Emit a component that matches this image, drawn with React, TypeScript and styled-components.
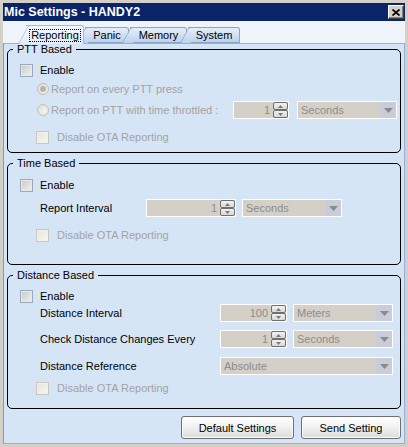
import React from "react";
import styled, { createGlobalStyle } from "styled-components";

const Global = createGlobalStyle`
  html, body { margin: 0; padding: 0; background: #d4d0c8; }
  body { font-family: "Liberation Sans", Arial, sans-serif; font-size: 11px; color: #000; }
  * { box-sizing: border-box; }
`;

const Window = styled.div`
  width: 408px;
  height: 447px;
  background: #d4d0c8;
  padding: 3px 3px 3px 3px;
  display: flex;
  flex-direction: column;
`;

const TitleBar = styled.div`
  height: 18px;
  background: #0a246a;
  display: flex;
  align-items: center;
  justify-content: space-between;
  padding: 0 1px 0 1px;
`;

const TitleText = styled.span`
  color: #fff;
  font-weight: bold;
  font-size: 12.5px;
`;

const CloseButton = styled.div`
  width: 16px;
  height: 14px;
  background: #d4d0c8;
  border: 1px solid;
  border-color: #fff #404040 #404040 #fff;
  box-shadow: inset -1px -1px 0 #808080;
  display: flex;
  align-items: center;
  justify-content: center;
`;

const TabStrip = styled.div`
  height: 22px;
  background: #eff3fa;
  display: flex;
  align-items: flex-end;
  padding-left: 23px;
`;

const Tab = styled.div<{ $active?: boolean; $w: number }>`
  position: relative;
  width: ${(p) => p.$w}px;
  height: ${(p) => (p.$active ? 19 : 16)}px;
  margin-right: 1px;
  margin-bottom: ${(p) => (p.$active ? -1 : 0)}px;
  z-index: ${(p) => (p.$active ? 3 : 1)};
  border: 1px solid ${(p) => (p.$active ? "#9fbbe0" : "#8aa5c8")};
  border-left: none;
  border-bottom: ${(p) => (p.$active ? "none" : "1px solid #8aa5c8")};
  border-top-right-radius: 3px;
  background: ${(p) =>
    p.$active
      ? "linear-gradient(#f4f8fd, #e2edf9)"
      : "linear-gradient(#e6eef9, #bcd2ec)"};
  display: flex;
  align-items: center;
  justify-content: center;
  padding-left: 1px;
  color: #000;

  &::before {
    content: "";
    position: absolute;
    left: -8px;
    top: -1px;
    bottom: ${(p) => (p.$active ? 0 : -1)}px;
    width: 10px;
    border-left: 1px solid ${(p) => (p.$active ? "#9fbbe0" : "#8aa5c8")};
    border-top: 1px solid ${(p) => (p.$active ? "#9fbbe0" : "#8aa5c8")};
    border-top-left-radius: 3px;
    background: inherit;
    transform-origin: bottom left;
    transform: skewX(-28deg);
    z-index: -1;
  }
`;

const TabLabel = styled.span<{ $focus?: boolean }>`
  position: relative;
  z-index: 2;
  padding: 0 1px;
  line-height: 11px;
  white-space: nowrap;
  border: 1px dotted ${(p) => (p.$focus ? "#000" : "transparent")};
`;

const Panel = styled.div`
  flex: 1;
  position: relative;
  z-index: 2;
  background: #d6e5f6;
  border: 1px solid #8fb1dc;
  border-left-color: #7f9db9;
  padding: 0 3px 0 3px;
  display: flex;
  flex-direction: column;
`;

const Group = styled.fieldset<{ $h: number; $mt: number }>`
  margin: ${(p) => p.$mt}px 0 0 0;
  padding: 0;
  min-width: 0;
  height: ${(p) => p.$h}px;
  border: 1px solid #000;
  border-radius: 5px;
`;

const Legend = styled.legend`
  margin-left: 5px;
  padding: 0 4px;
  line-height: 12px;
  font-size: 11px;
  color: #000;
`;

const Row = styled.div<{ $mt: number; $ml: number; $h?: number; $gap?: number }>`
  display: flex;
  align-items: center;
  height: ${(p) => p.$h ?? 18}px;
  margin-top: ${(p) => p.$mt}px;
  padding-left: ${(p) => p.$ml}px;
  gap: ${(p) => p.$gap ?? 0}px;
`;

const Label = styled.span<{ $dim?: boolean; $w?: number; $ml?: number }>`
  color: ${(p) => (p.$dim ? "#a3a3a3" : "#000")};
  width: ${(p) => (p.$w ? `${p.$w}px` : "auto")};
  margin-left: ${(p) => p.$ml ?? 0}px;
  white-space: nowrap;
  flex-shrink: 0;
`;

const Check = styled.span<{ $dim?: boolean }>`
  width: 13px;
  height: 13px;
  flex-shrink: 0;
  border: 1px solid ${(p) => (p.$dim ? "#cac8bb" : "#9aa9bd")};
  background: ${(p) =>
    p.$dim
      ? "linear-gradient(135deg, #e6e4da, #f7f7f4)"
      : "linear-gradient(135deg, #c9c9c6, #f2f2f0)"};
  box-shadow: inset 0 0 0 1px ${(p) => (p.$dim ? "#f2f1ea" : "#e8e8e6")};
`;

const Radio = styled.span<{ $checked?: boolean }>`
  width: 12px;
  height: 12px;
  flex-shrink: 0;
  border-radius: 50%;
  border: 1px solid #c2c0b4;
  background: radial-gradient(circle at 65% 65%, #f4f4f0, #dcdad0);
  display: flex;
  align-items: center;
  justify-content: center;
  &::after {
    content: "";
    display: ${(p) => (p.$checked ? "block" : "none")};
    width: 6px;
    height: 6px;
    border-radius: 50%;
    background: #b8b6aa;
  }
`;

const Field = styled.div<{ $w: number }>`
  width: ${(p) => p.$w}px;
  height: 18px;
  flex-shrink: 0;
  border: 1px solid #fff;
  background: #d4d0c8;
  display: flex;
  align-items: center;
  color: #8d8d8d;
`;

const FieldValue = styled.span`
  flex: 1;
  text-align: right;
  padding-right: 3px;
`;

const SpinBox = styled.div`
  width: 15px;
  height: 16px;
  display: flex;
  flex-direction: column;
`;

const SpinBtn = styled.div`
  flex: 1;
  border: 1px solid #6f6f6f;
  border-radius: 2px;
  background: linear-gradient(#f2f2f2, #d8d8d8);
  display: flex;
  align-items: center;
  justify-content: center;
`;

const ComboText = styled.span`
  flex: 1;
  padding-left: 3px;
`;

const DropBtn = styled.div`
  width: 16px;
  height: 16px;
  background: #c9ccd9;
  display: flex;
  align-items: center;
  justify-content: center;
`;

const ButtonRow = styled.div`
  display: flex;
  justify-content: flex-end;
  gap: 7px;
  margin-top: 7px;
`;

const Button = styled.div<{ $w: number }>`
  width: ${(p) => p.$w}px;
  height: 23px;
  border: 1px solid #707070;
  border-radius: 3px;
  background: linear-gradient(#ffffff, #f0f0f0 50%, #dcdcdc);
  box-shadow: inset 0 0 0 1px #fbfbfb;
  display: flex;
  align-items: center;
  justify-content: center;
  color: #000;
`;

const Arrow = ({ up }: { up?: boolean }) => (
  <svg width="5" height="3" viewBox="0 0 5 3">
    <path d={up ? "M0 3 L2.5 0 L5 3 Z" : "M0 0 L2.5 3 L5 0 Z"} fill="#7a7a7a" />
  </svg>
);

const Spinner = ({ w, value }: { w: number; value: string }) => (
  <Field $w={w}>
    <FieldValue>{value}</FieldValue>
    <SpinBox>
      <SpinBtn>
        <Arrow up />
      </SpinBtn>
      <SpinBtn>
        <Arrow />
      </SpinBtn>
    </SpinBox>
  </Field>
);

const Combo = ({ w, value }: { w: number; value: string }) => (
  <Field $w={w}>
    <ComboText>{value}</ComboText>
    <DropBtn>
      <svg width="9" height="5" viewBox="0 0 9 5">
        <path d="M0 0 L9 0 L4.5 5 Z" fill="#8a8a8a" />
      </svg>
    </DropBtn>
  </Field>
);

export default function App() {
  return (
    <>
      <Global />
      <Window>
        <TitleBar>
          <TitleText>Mic Settings - HANDY2</TitleText>
          <CloseButton>
            <svg width="8" height="7" viewBox="0 0 8 7">
              <path d="M0.5 0.5 L7.5 6.5 M7.5 0.5 L0.5 6.5" stroke="#000" strokeWidth="1.6" />
            </svg>
          </CloseButton>
        </TitleBar>
        <TabStrip>
          <Tab $active $w={58}>
            <TabLabel $focus>Reporting</TabLabel>
          </Tab>
          <Tab $w={44}>
            <TabLabel>Panic</TabLabel>
          </Tab>
          <Tab $w={57}>
            <TabLabel>Memory</TabLabel>
          </Tab>
          <Tab $w={52}>
            <TabLabel>System</TabLabel>
          </Tab>
        </TabStrip>
        <Panel>
          <Group $h={110} $mt={-1}>
            <Legend>PTT Based</Legend>
            <Row $mt={6} $ml={12} $gap={7}>
              <Check />
              <Label>Enable</Label>
            </Row>
            <Row $mt={1} $ml={29} $gap={2}>
              <Radio $checked />
              <Label $dim>Report on every PTT press</Label>
            </Row>
            <Row $mt={3} $ml={29} $gap={2}>
              <Radio />
              <Label $dim $w={180}>Report on PTT with time throttled :</Label>
              <Spinner w={56} value="1" />
              <Label $ml={4} />
              <Combo w={100} value="Seconds" />
            </Row>
            <Row $mt={9} $ml={28} $gap={8}>
              <Check $dim />
              <Label $dim>Disable OTA Reporting</Label>
            </Row>
          </Group>

          <Group $h={108} $mt={4}>
            <Legend>Time Based</Legend>
            <Row $mt={7} $ml={12} $gap={7}>
              <Check />
              <Label>Enable</Label>
            </Row>
            <Row $mt={5} $ml={32}>
              <Label $w={106}>Report Interval</Label>
              <Spinner w={90} value="1" />
              <Label $ml={6} />
              <Combo w={100} value="Seconds" />
            </Row>
            <Row $mt={9} $ml={28} $gap={8}>
              <Check $dim />
              <Label $dim>Disable OTA Reporting</Label>
            </Row>
          </Group>

          <Group $h={140} $mt={4}>
            <Legend>Distance Based</Legend>
            <Row $mt={7} $ml={12} $gap={7} $h={16}>
              <Check />
              <Label>Enable</Label>
            </Row>
            <Row $mt={0} $ml={32}>
              <Label $w={180}>Distance Interval</Label>
              <Spinner w={67} value="100" />
              <Label $ml={6} />
              <Combo w={100} value="Meters" />
            </Row>
            <Row $mt={8} $ml={32}>
              <Label $w={180}>Check Distance Changes Every</Label>
              <Spinner w={67} value="1" />
              <Label $ml={6} />
              <Combo w={100} value="Seconds" />
            </Row>
            <Row $mt={9} $ml={32}>
              <Label $w={180}>Distance Reference</Label>
              <Combo w={173} value="Absolute" />
            </Row>
            <Row $mt={4} $ml={28} $gap={8}>
              <Check $dim />
              <Label $dim>Disable OTA Reporting</Label>
            </Row>
          </Group>

          <ButtonRow>
            <Button $w={113}>Default Settings</Button>
            <Button $w={100}>Send Setting</Button>
          </ButtonRow>
        </Panel>
      </Window>
    </>
  );
}
